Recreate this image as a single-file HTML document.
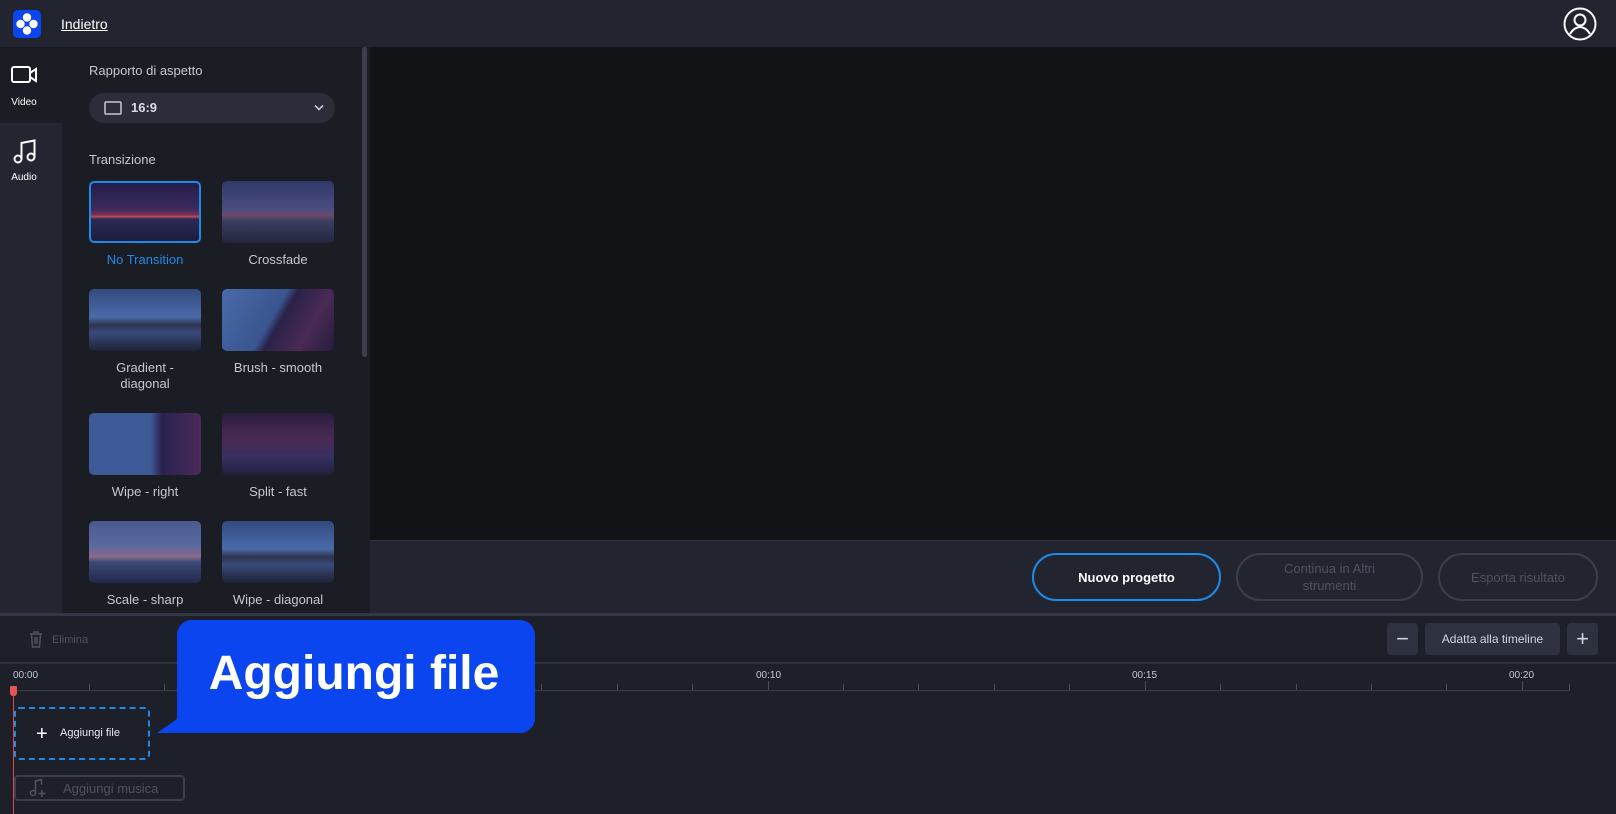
<!DOCTYPE html>
<html><head><meta charset="utf-8"><style>
*{margin:0;padding:0;box-sizing:border-box}
body{width:1616px;height:814px;overflow:hidden;background:#1f212a;font-family:"Liberation Sans",sans-serif;color:#e6e8ee;position:relative}
.a{position:absolute}
.hdr{left:0;top:0;width:1616px;height:47px;background:#22252f}
.nav{left:0;top:47px;width:62px;height:566px;background:#232631}
.navsel{left:0;top:47px;width:62px;height:76px;background:#1b1d24}
.panel{left:62px;top:47px;width:308px;height:566px;background:#1b1d24}
.prev{left:370px;top:47px;width:1246px;height:493px;background:#121316}
.bar{left:370px;top:540px;width:1246px;height:73px;background:#22252f;border-top:1px solid #2e3240}
.sep{left:0;top:613px;width:1616px;height:3px;background:#343846}
.tl{left:0;top:616px;width:1616px;height:198px;background:#1e2029}
.lbl{font-size:13px;color:#c4c8d2}
.th{width:112px;height:62px;border-radius:5px;overflow:hidden}
.city{background:linear-gradient(180deg,#241d48 0%,#3b2a5e 45%,#7a3050 55%,#c04a5a 58%,#2a2a55 62%,#1c1d3c 100%)}
.land{background:linear-gradient(180deg,#344a80 0%,#4a6aa8 45%,#2e3450 58%,#3a4a7a 70%,#1d2236 100%)}
.cap{width:112px;text-align:center;font-size:13px;color:#c4c8d2;line-height:16px}
.btn{border-radius:24px;border:2px solid #3a3e4c;font-size:13px;color:#4d5262;text-align:center;display:flex;align-items:center;justify-content:center;line-height:17px}
.tb{background:#2e3240;border-radius:4px;color:#d0d4dc;font-size:12px;display:flex;align-items:center;justify-content:center}
.tick{width:1px;height:6px;background:#4a4e5c;top:684px}
.tm{font-size:10px;color:#c4c8d2;top:670px}
</style></head><body>
<div class="a hdr"></div>
<div class="a" style="left:13px;top:10px;width:28px;height:28px;background:#0a45f0;border-radius:5px">
<svg width="28" height="28"><circle cx="14" cy="7.5" r="4.2" fill="#fff"/><circle cx="7.5" cy="14" r="4.2" fill="#fff"/><circle cx="20.5" cy="14" r="4.2" fill="#fff"/><circle cx="14" cy="20.5" r="4.2" fill="#fff"/></svg></div>
<div class="a" style="left:61px;top:16px;font-size:14px;text-decoration:underline;color:#fff">Indietro</div>
<svg class="a" style="left:1563px;top:7px" width="34" height="34" fill="none" stroke="#fff" stroke-width="2"><circle cx="17" cy="17" r="15.5"/><circle cx="17" cy="13" r="5.5"/><path d="M7 27c3-5 7-7 10-7s7 2 10 7"/></svg>

<div class="a nav"></div><div class="a navsel"></div>
<svg class="a" style="left:11px;top:64px" width="27" height="22" fill="none" stroke="#fff" stroke-width="2"><rect x="1" y="3" width="18" height="15" rx="2"/><path d="M19 9l6-4v12l-6-4"/></svg>
<div class="a" style="left:0;top:97px;width:48px;text-align:center;font-size:10px;color:#fff">Video</div>
<svg class="a" style="left:13px;top:139px" width="24" height="26" fill="none" stroke="#fff" stroke-width="2"><circle cx="5" cy="20" r="3.5"/><circle cx="18" cy="18" r="3.5"/><path d="M8.5 20V4L21.5 1.5V18"/></svg>
<div class="a" style="left:0;top:172px;width:48px;text-align:center;font-size:10px;color:#fff">Audio</div>

<div class="a panel"></div>
<div class="a" style="left:362px;top:47px;width:5px;height:310px;background:#3c404e;border-radius:3px"></div>
<div class="a lbl" style="left:89px;top:63px">Rapporto di aspetto</div>
<div class="a" style="left:89px;top:93px;width:246px;height:30px;background:#2b2e3a;border-radius:15px"></div>
<svg class="a" style="left:104px;top:101px" width="18" height="14" fill="none" stroke="#c4c8d2" stroke-width="1.5"><rect x="1" y="1" width="16" height="12" rx="1"/></svg>
<div class="a" style="left:131px;top:100px;font-size:13px;font-weight:bold;color:#d8dce4">16:9</div>
<svg class="a" style="left:314px;top:104px" width="10" height="8" fill="none" stroke="#c4c8d2" stroke-width="1.6"><path d="M1 1.5l4 4 4-4"/></svg>
<div class="a lbl" style="left:89px;top:152px">Transizione</div>

<div class="a th city" style="left:89px;top:181px;border:2px solid #1c8ae8"></div>
<div class="a cap" style="left:89px;top:252px;color:#1c8ae8">No Transition</div>
<div class="a th" style="left:222px;top:181px;background:linear-gradient(180deg,#30386a 0%,#4a4c80 45%,#6a4a68 55%,#3a3e60 65%,#22263e 100%)"></div>
<div class="a cap" style="left:222px;top:252px">Crossfade</div>

<div class="a th land" style="left:89px;top:289px"></div>
<div class="a cap" style="left:89px;top:360px">Gradient -<br>diagonal</div>
<div class="a th" style="left:222px;top:289px;background:linear-gradient(120deg,#4a6aa8 0%,#3a5590 45%,#2a2248 52%,#4a2a55 75%,#251c3c 100%)"></div>
<div class="a cap" style="left:222px;top:360px">Brush - smooth</div>

<div class="a th" style="left:89px;top:413px;background:linear-gradient(90deg,#3e5a98 0%,#3e5a98 55%,#2a2250 65%,#4a2a58 100%)"></div>
<div class="a cap" style="left:89px;top:484px">Wipe - right</div>
<div class="a th city" style="left:222px;top:413px;background:linear-gradient(180deg,#2a1c40 0%,#4a2a52 40%,#3a3060 70%,#1e2040 100%)"></div>
<div class="a cap" style="left:222px;top:484px">Split - fast</div>

<div class="a th" style="left:89px;top:521px;background:linear-gradient(180deg,#4a5a90 0%,#5a6aa0 40%,#8a6a88 58%,#3a4a78 66%,#22284a 100%)"></div>
<div class="a cap" style="left:89px;top:592px">Scale - sharp</div>
<div class="a th land" style="left:222px;top:521px"></div>
<div class="a cap" style="left:222px;top:592px">Wipe - diagonal</div>

<div class="a prev"></div>
<div class="a bar"></div>
<div class="a btn" style="left:1032px;top:553px;width:189px;height:48px;border-color:#1c8ae8;color:#fff;font-weight:bold">Nuovo progetto</div>
<div class="a btn" style="left:1236px;top:553px;width:187px;height:48px">Continua in Altri<br>strumenti</div>
<div class="a btn" style="left:1438px;top:553px;width:160px;height:48px">Esporta risultato</div>

<div class="a sep"></div>
<div class="a tl"></div>
<svg class="a" style="left:29px;top:631px" width="14" height="17" fill="none" stroke="#4d5262" stroke-width="1.5"><path d="M1 3h12M5 3V1h4v2M2.5 3l1 13h7l1-13M6 6v7M8 6v7"/></svg>
<div class="a" style="left:52px;top:634px;font-size:11px;color:#4d5262">Elimina</div>
<div class="a tb" style="left:1387px;top:623px;width:31px;height:32px;font-size:22px">−</div>
<div class="a tb" style="left:1425px;top:623px;width:135px;height:32px">Adatta alla timeline</div>
<div class="a tb" style="left:1567px;top:623px;width:31px;height:32px;font-size:22px">+</div>
<div class="a" style="left:0;top:662px;width:1616px;height:2px;background:#2e3240"></div>
<div class="a" style="left:13px;top:690px;width:1557px;height:1px;background:#3a3e4c"></div>
<div class="a tm" style="left:13px">00:00</div>
<div class="a tm" style="left:756px">00:10</div>
<div class="a tm" style="left:1132px">00:15</div>
<div class="a tm" style="left:1509px">00:20</div>
<div class="a tick" style="left:89px"></div><div class="a tick" style="left:164px"></div><div class="a tick" style="left:240px"></div><div class="a tick" style="left:315px"></div><div class="a tick" style="left:390px"></div><div class="a tick" style="left:466px"></div><div class="a tick" style="left:541px"></div><div class="a tick" style="left:617px"></div><div class="a tick" style="left:692px"></div><div class="a tick" style="left:768px;height:9px;top:681px"></div><div class="a tick" style="left:843px"></div><div class="a tick" style="left:918px"></div><div class="a tick" style="left:994px"></div><div class="a tick" style="left:1069px"></div><div class="a tick" style="left:1145px;height:9px;top:681px"></div><div class="a tick" style="left:1220px"></div><div class="a tick" style="left:1296px"></div><div class="a tick" style="left:1371px"></div><div class="a tick" style="left:1446px"></div><div class="a tick" style="left:1522px;height:9px;top:681px"></div><div class="a tick" style="left:1569px"></div>
<div class="a" style="left:13px;top:690px;width:1px;height:124px;background:#e04848"></div>
<div class="a" style="left:10px;top:686px;width:7px;height:10px;background:#e85454;border-radius:1px 1px 3px 3px"></div>
<div class="a" style="left:14px;top:707px;width:136px;height:53px;border:2px dashed #1c8ae8;border-radius:5px"></div>
<div class="a" style="left:36px;top:723px;font-size:20px;color:#fff;font-weight:300">+</div>
<div class="a" style="left:60px;top:727px;font-size:11px;color:#e6e8ee">Aggiungi file</div>
<div class="a" style="left:14px;top:775px;width:171px;height:26px;border:2px solid #3a3e4c;border-radius:4px"></div>
<svg class="a" style="left:29px;top:778px" width="20" height="20" fill="none" stroke="#4d5262" stroke-width="1.5"><circle cx="4" cy="15" r="2.5"/><path d="M6.5 15V3l6-1.5v5M13 12v7M9.5 15.5h7"/></svg>
<div class="a" style="left:63px;top:781px;font-size:13px;color:#4d5262">Aggiungi musica</div>

<svg class="a" style="left:150px;top:618px" width="385" height="118"><path d="M40 2h330a15 15 0 0 1 15 15v83a15 15 0 0 1-15 15H7l20-14V17A15 15 0 0 1 40 2z" fill="#0a45f0"/></svg>
<div class="a" style="left:170px;top:646px;width:368px;text-align:center;font-size:48px;font-weight:bold;color:#fff">Aggiungi file</div>
</body></html>
